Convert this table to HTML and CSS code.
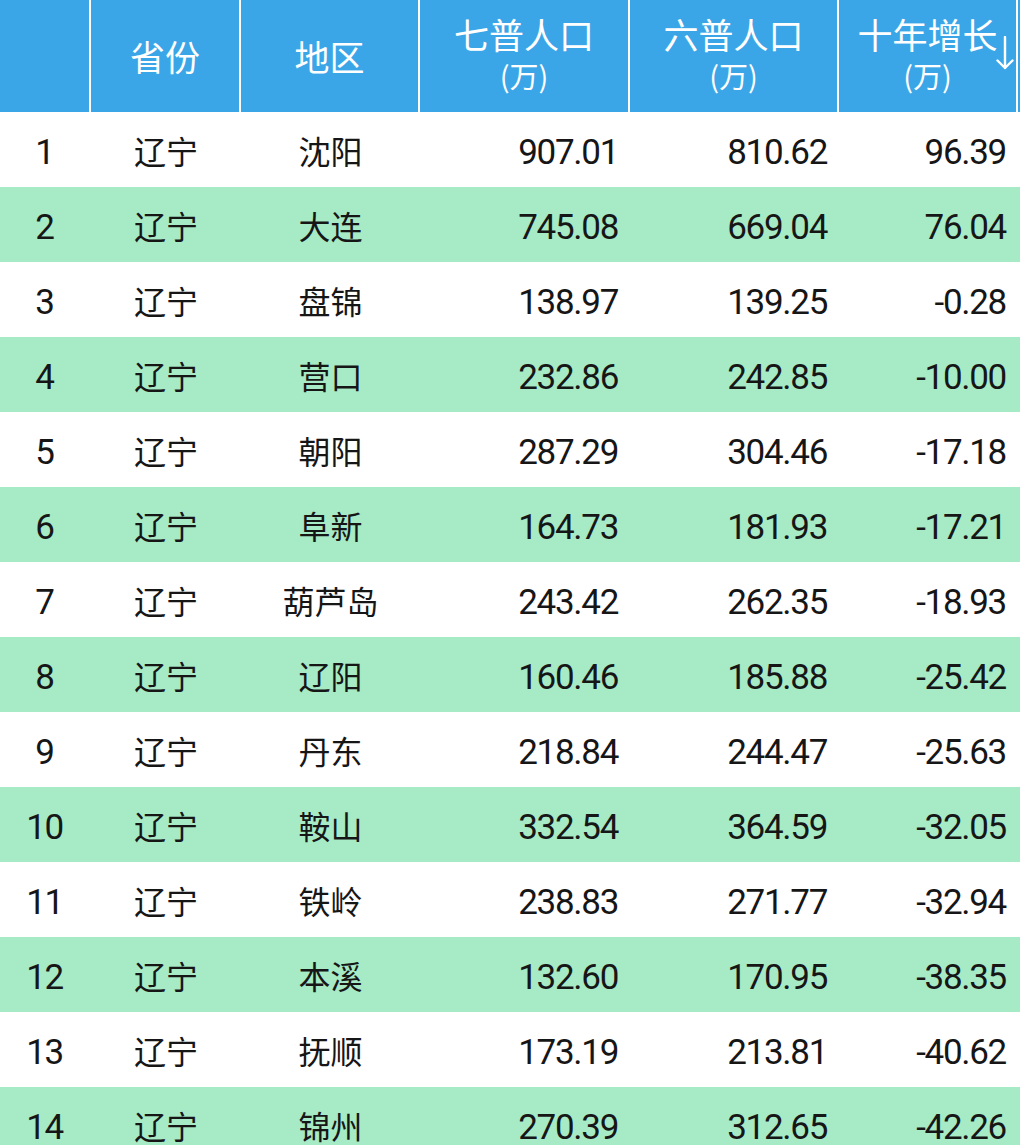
FILE: index.html
```html
<!DOCTYPE html>
<html lang="zh-CN">
<head>
<meta charset="utf-8">
<link rel="stylesheet" href="styles.css">
</head>
<body>
<div class="table">
  <div class="row head">
    <div class="cell"></div>
    <div class="cell">省份</div>
    <div class="cell">地区</div>
    <div class="cell two"><span class="title">七普人口</span><span class="unit">(万)</span></div>
    <div class="cell two"><span class="title">六普人口</span><span class="unit">(万)</span></div>
    <div class="cell two sort"><span class="title">十年增长</span><span class="unit">(万)</span>
      <svg class="arrow" width="18" height="34" viewBox="0 0 18 34"><path d="M9 1V32M1.5 24.5L9 32L16.5 24.5" fill="none" stroke="#fff" stroke-width="2.4" stroke-linecap="round" stroke-linejoin="round"/></svg>
    </div>
    <div class="cell edge"></div>
  </div>
  <div class="row"><div class="cell num">1</div><div class="cell">辽宁</div><div class="cell">沈阳</div><div class="cell val">907.01</div><div class="cell val">810.62</div><div class="cell val">96.39</div><div class="cell"></div></div>
  <div class="row alt"><div class="cell num">2</div><div class="cell">辽宁</div><div class="cell">大连</div><div class="cell val">745.08</div><div class="cell val">669.04</div><div class="cell val">76.04</div><div class="cell"></div></div>
  <div class="row"><div class="cell num">3</div><div class="cell">辽宁</div><div class="cell">盘锦</div><div class="cell val">138.97</div><div class="cell val">139.25</div><div class="cell val">-0.28</div><div class="cell"></div></div>
  <div class="row alt"><div class="cell num">4</div><div class="cell">辽宁</div><div class="cell">营口</div><div class="cell val">232.86</div><div class="cell val">242.85</div><div class="cell val">-10.00</div><div class="cell"></div></div>
  <div class="row"><div class="cell num">5</div><div class="cell">辽宁</div><div class="cell">朝阳</div><div class="cell val">287.29</div><div class="cell val">304.46</div><div class="cell val">-17.18</div><div class="cell"></div></div>
  <div class="row alt"><div class="cell num">6</div><div class="cell">辽宁</div><div class="cell">阜新</div><div class="cell val">164.73</div><div class="cell val">181.93</div><div class="cell val">-17.21</div><div class="cell"></div></div>
  <div class="row"><div class="cell num">7</div><div class="cell">辽宁</div><div class="cell">葫芦岛</div><div class="cell val">243.42</div><div class="cell val">262.35</div><div class="cell val">-18.93</div><div class="cell"></div></div>
  <div class="row alt"><div class="cell num">8</div><div class="cell">辽宁</div><div class="cell">辽阳</div><div class="cell val">160.46</div><div class="cell val">185.88</div><div class="cell val">-25.42</div><div class="cell"></div></div>
  <div class="row"><div class="cell num">9</div><div class="cell">辽宁</div><div class="cell">丹东</div><div class="cell val">218.84</div><div class="cell val">244.47</div><div class="cell val">-25.63</div><div class="cell"></div></div>
  <div class="row alt"><div class="cell num">10</div><div class="cell">辽宁</div><div class="cell">鞍山</div><div class="cell val">332.54</div><div class="cell val">364.59</div><div class="cell val">-32.05</div><div class="cell"></div></div>
  <div class="row"><div class="cell num">11</div><div class="cell">辽宁</div><div class="cell">铁岭</div><div class="cell val">238.83</div><div class="cell val">271.77</div><div class="cell val">-32.94</div><div class="cell"></div></div>
  <div class="row alt"><div class="cell num">12</div><div class="cell">辽宁</div><div class="cell">本溪</div><div class="cell val">132.60</div><div class="cell val">170.95</div><div class="cell val">-38.35</div><div class="cell"></div></div>
  <div class="row"><div class="cell num">13</div><div class="cell">辽宁</div><div class="cell">抚顺</div><div class="cell val">173.19</div><div class="cell val">213.81</div><div class="cell val">-40.62</div><div class="cell"></div></div>
  <div class="row alt"><div class="cell num">14</div><div class="cell">辽宁</div><div class="cell">锦州</div><div class="cell val">270.39</div><div class="cell val">312.65</div><div class="cell val">-42.26</div><div class="cell"></div></div>
</div>
</body>
</html>
```

FILE: styles.css
```css
html, body {
  margin: 0;
  padding: 0;
  background: #ffffff;
}
body {
  width: 1020px;
  overflow: hidden;
  font-family: "Noto Sans CJK SC", "Noto Sans", sans-serif;
  color: #161616;
}
.table {
  display: flex;
  flex-direction: column;
}
.row {
  display: grid;
  grid-template-columns: 91px 150px 179px 210px 209px 179px 2px;
  height: 75px;
  background: #ffffff;
}
.row.alt {
  background: #a6ebc6;
}
.cell {
  box-sizing: border-box;
  display: flex;
  align-items: center;
  justify-content: center;
  font-size: 32px;
  line-height: 1;
  white-space: nowrap;
}
.num, .val {
  font-family: Roboto, "Noto Sans", sans-serif;
  font-size: 35px;
  letter-spacing: -1.3px;
  padding-top: 6px;
}
.num {
  padding-right: 2px;
}
.val {
  justify-content: flex-end;
  padding-right: 12px;
}
.row.head {
  height: 112px;
  background: #ffffff;
}
.head .cell {
  background: #3ba6e7;
  color: #ffffff;
  border-right: 2px solid #ffffff;
  font-size: 35px;
  padding-bottom: 2px;
}
.head .cell.edge {
  border-right: 0;
}
.head .two {
  flex-direction: column;
  gap: 4px;
  padding-top: 0;
  padding-bottom: 4px;
}
.head .title {
  line-height: 38px;
}
.head .unit {
  font-size: 29px;
  line-height: 36px;
}
.head .sort {
  position: relative;
}
.arrow {
  position: absolute;
  left: 157px;
  top: 36px;
}
```
